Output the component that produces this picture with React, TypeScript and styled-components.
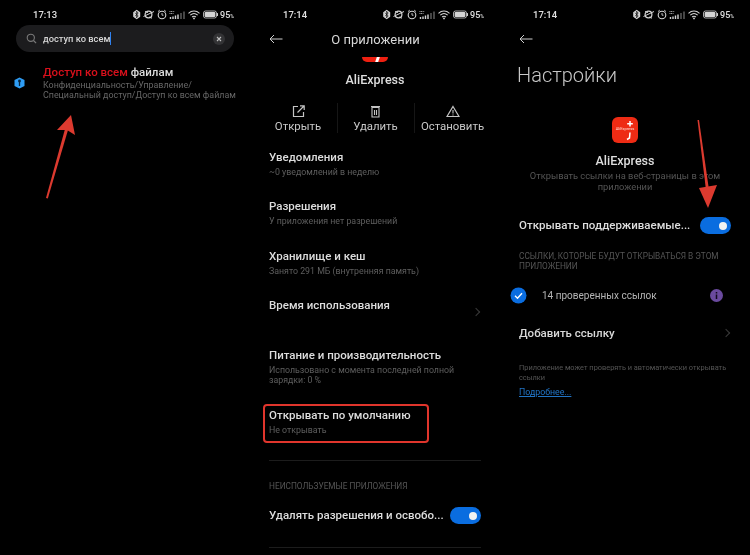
import React from "react";
import styled, { createGlobalStyle } from "styled-components";

const GlobalStyle = createGlobalStyle`
  html, body {
    margin: 0;
    padding: 0;
    background: #000;
  }
  * {
    box-sizing: border-box;
  }
`;

const Screens = styled.div`
  width: 750px;
  height: 555px;
  display: grid;
  grid-template-columns: repeat(3, 250px);
  background: #000;
  overflow: hidden;
  font-family: Roboto, "Noto Sans", sans-serif;
  color: #e4e4e4;
`;

const Phone = styled.div`
  position: relative;
  height: 555px;
  overflow: hidden;
  filter: blur(0.35px);
`;

const StatusRow = styled.div`
  height: 25px;
  padding: 4px 16px 0 33px;
  display: flex;
  align-items: center;
  justify-content: space-between;
`;

const Clock = styled.span`
  font-size: 9.5px;
  font-weight: 500;
  color: #e0e0e0;
`;

const StatusIcons = styled.div`
  display: flex;
  align-items: center;
  gap: 2px;
`;

const Battery = styled.span`
  font-size: 9px;
  font-weight: 500;
  color: #e0e0e0;
  small {
    font-size: 5px;
  }
`;

const SearchBar = styled.div`
  margin: 0 16px;
  height: 27px;
  border-radius: 14px;
  background: #1c1c1e;
  display: flex;
  align-items: center;
  padding: 0 9px 0 10px;
`;

const SearchText = styled.span`
  margin-left: 6px;
  font-size: 9.3px;
  font-weight: 500;
  color: #d8d8d8;
  border-right: 1px solid #2f80ed;
  line-height: 13px;
  flex: none;
  white-space: nowrap;
`;

const ClearButton = styled.span`
  margin-left: auto;
  width: 12px;
  height: 12px;
  border-radius: 50%;
  background: #333335;
  display: flex;
  align-items: center;
  justify-content: center;
`;

const Result = styled.div`
  margin-top: 12px;
  padding-left: 14px;
  display: flex;
  align-items: center;
  gap: 3px;
`;

const ResultTitle = styled.div`
  font-size: 11.5px;
  font-weight: 500;
  line-height: 16px;
  color: #dcdcdc;
  em {
    font-style: normal;
    color: #d8101c;
  }
`;

const ResultPath = styled.div`
  font-size: 8.9px;
  line-height: 10.3px;
  color: #666;
  white-space: nowrap;
`;

const ResultIcon = styled.span`
  width: 20px;
  flex: none;
  padding-top: 2px;
  display: flex;
`;

const ResultBody = styled.div`
  margin-left: 6px;
`;

const NavBar = styled.div`
  height: 28px;
  padding: 0 19px;
  display: flex;
  align-items: center;
  position: relative;
`;

const NavTitle = styled.div`
  flex: 1;
  text-align: center;
  margin-right: 13px;
  font-size: 13px;
  font-weight: 400;
  color: #d8d8d8;
`;

const LogoStub = styled.div`
  width: 26px;
  height: 5px;
  margin: 4px auto 0;
  background: #ee2011;
  border-radius: 0 0 7px 7px;
  display: flex;
  justify-content: center;
`;

const StubMark = styled.span`
  width: 3px;
  height: 5px;
  margin-left: 5px;
  background: #fff;
  transform: skewX(-18deg);
`;

const AppName = styled.div`
  margin-top: 10px;
  text-align: center;
  font-size: 12.5px;
  font-weight: 500;
  line-height: 16px;
  color: #dedede;
`;

const Actions = styled.div`
  margin: 15px 9.5px 0;
  height: 30px;
  display: grid;
  grid-template-columns: 1fr 1fr 1fr;
`;

const Action = styled.div<{ $divided?: boolean }>`
  display: flex;
  flex-direction: column;
  align-items: center;
  justify-content: space-between;
  padding-top: 2px;
  font-size: 11.4px;
  line-height: 13px;
  color: #c8c8c8;
  white-space: nowrap;
  border-left: ${(p) => (p.$divided ? "1px solid #161616" : "none")};
`;

const ListBody = styled.div`
  margin-top: 16.5px;
  padding: 0 19px;
`;

const ListRow = styled.div<{ $boxed?: boolean; $tall?: boolean }>`
  position: relative;
  min-height: ${(p) => (p.$tall ? 60 : 49.5)}px;
  display: flex;
  align-items: flex-start;
  justify-content: space-between;
  ${(p) =>
    p.$boxed &&
    `&::after {
      content: "";
      box-sizing: border-box;
      position: absolute;
      left: -6px;
      top: -4px;
      width: 166px;
      height: 39px;
      border: 2px solid #e0352c;
      border-radius: 4px;
    }`}
`;

const RowTitle = styled.div`
  font-size: 11.5px;
  font-weight: 500;
  line-height: 15px;
  color: #dcdcdc;
  white-space: nowrap;
`;

const RowSub = styled.div`
  font-size: 8.8px;
  line-height: 10px;
  margin-top: 2px;
  color: #5e5e5e;
`;

const Chevron = styled.span<{ $centered?: boolean }>`
  width: 6px;
  height: 6px;
  border-top: 1px solid #3a3a3a;
  border-right: 1px solid #3a3a3a;
  transform: rotate(45deg);
  margin: ${(p) => (p.$centered ? "0 2px 0 0" : "11px 2px 0 0")};
`;

const Divider = styled.div<{ $top: number }>`
  height: 1px;
  background: #1c1c1c;
  margin-top: ${(p) => p.$top}px;
`;

const SectionLabel = styled.div<{ $top: number }>`
  margin-top: ${(p) => p.$top}px;
  font-size: 8.3px;
  line-height: 10px;
  color: #555;
`;

const ToggleRow = styled.div<{ $top: number }>`
  margin-top: ${(p) => p.$top}px;
  height: 17px;
  display: flex;
  align-items: center;
  justify-content: space-between;
`;

const Toggle = styled.span`
  width: 31px;
  height: 17px;
  border-radius: 9px;
  background: #0a6de0;
  display: flex;
  align-items: center;
  justify-content: flex-end;
  padding-right: 4px;
  flex: none;
  &::after {
    content: "";
    width: 8px;
    height: 8px;
    border-radius: 50%;
    background: #f2f2f2;
  }
`;

const PageTitle = styled.div`
  margin: 9px 0 0 17px;
  font-size: 20px;
  font-weight: 300;
  line-height: 26px;
  color: #c8c8c8;
`;

const LogoTile = styled.div`
  width: 26px;
  height: 26px;
  margin: 29px auto 0;
  display: block;
`;

const AppHint = styled.div`
  margin-top: 1px;
  text-align: center;
  font-size: 9.3px;
  line-height: 11px;
  color: #555;
  white-space: nowrap;
`;

const SettingsBody = styled.div`
  padding: 0 19px;
`;

const LinkRow = styled.div`
  margin: 16px 0 0 -9px;
  height: 17px;
  display: flex;
  align-items: center;
  font-size: 10px;
  color: #b4b4b4;
`;

const LinkText = styled.span`
  margin-left: 15px;
  flex: 1;
`;

const InfoBadge = styled.span`
  margin-right: 8px;
  display: flex;
`;

const AddLink = styled.div`
  margin-top: 21px;
  display: flex;
  align-items: center;
  justify-content: space-between;
  font-size: 11.5px;
  font-weight: 500;
  line-height: 16px;
  color: #d8d8d8;
`;

const FinePrint = styled.div`
  margin-top: 22px;
  font-size: 7.4px;
  line-height: 9.5px;
  color: #555;
  white-space: nowrap;
`;

const MoreLink = styled.a`
  display: block;
  margin-top: 5px;
  font-size: 8.8px;
  line-height: 11px;
  color: #2173c4;
  text-decoration: underline;
`;

const ArrowSvg = styled.svg<{ $x: number; $y: number }>`
  position: absolute;
  left: ${(p) => p.$x}px;
  top: ${(p) => p.$y}px;
`;

const StatusBar = ({ time }: { time: string }) => (
  <StatusRow>
    <Clock>{time}</Clock>
    <StatusIcons>
      <svg width="86" height="11" viewBox="0 0 86 11" fill="none">
        {/* bluetooth */}
        <g transform="translate(1.2 0)">
          <path d="M3.5 0.8 7 3.2v4.6L3.5 10.2 0 7.8V3.2z" fill="#d4d4d4" />
          <path d="M3.5 2v7M2 3.8l3 3.2-1.5 1.5M2 7.2l3-3.2-1.5-1.500" stroke="#000" strokeWidth="0.7" />
        </g>
        {/* do not disturb */}
        <g transform="translate(1 0)">
          <circle cx="15.500" cy="5.500" r="3.400" stroke="#d4d4d4" strokeWidth="1.200" />
          <path d="M10.500 7.500 21 2.500M12 2.500l3 1M16 8l3 1.200" stroke="#d4d4d4" strokeWidth="1" />
        </g>
        {/* alarm */}
        <g transform="translate(1 0)">
          <circle cx="29" cy="6" r="3.800" stroke="#d4d4d4" strokeWidth="1.100" />
          <path d="M29 4v2.200h1.500M25 2.600 26.800 1.100M33 2.600 31.200 1.100" stroke="#d4d4d4" strokeWidth="0.900" />
        </g>
        {/* signal */}
        <path d="M37.500 2.500h5M37.500 4.500h4" stroke="#aaa" strokeWidth="1" strokeDasharray="1 0.600" />
        <path d="M38.500 10V8M41 10V7.500M43.500 10V6.500M46 10V5.500" stroke="#d4d4d4" strokeWidth="1.400" />
        <path d="M49 10V4M52 10V2.500" stroke="#6a6a6a" strokeWidth="1.300" />
        {/* wifi */}
        <g transform="translate(6.500 0)">
          <path d="M50 4.300c3.200-3 7.800-3 11 0M51.800 6.200c2.200-2 5.200-2 7.400 0M53.600 8c1.200-1 2.600-1 3.800 0" stroke="#d4d4d4" strokeWidth="1.100" />
          <circle cx="55.500" cy="9.400" r="0.900" fill="#d4d4d4" />
        </g>
        {/* battery */}
        <g transform="translate(6 0)">
          <rect x="65.500" y="2" width="13" height="7" rx="2" stroke="#d4d4d4" strokeWidth="0.800" />
          <rect x="66.600" y="3.100" width="10.800" height="4.800" rx="1" fill="#d4d4d4" />
          <rect x="79" y="4" width="1.200" height="3" rx="0.500" fill="#d4d4d4" />
        </g>
      </svg>
      <Battery>
        95<small>%</small>
      </Battery>
    </StatusIcons>
  </StatusRow>
);

const BackArrow = () => (
  <svg width="14" height="10" viewBox="0 0 14 10" fill="none">
    <path d="M13.500 5H1M5 1 1 5l4 4" stroke="#cfcfcf" strokeWidth="1" />
  </svg>
);

type RedArrowProps = {
  x: number;
  y: number;
  w: number;
  h: number;
  shaft: string;
  head: string;
};

const RedArrow = ({ x, y, w, h, shaft, head }: RedArrowProps) => (
  <ArrowSvg $x={x} $y={y} width={w} height={h} viewBox={`0 0 ${w} ${h}`}>
    <path d={shaft} fill="#dc3a2f" />
    <path d={head} fill="#dc3a2f" />
  </ArrowSvg>
);

const App = () => (
  <Screens>
    <GlobalStyle />
    <Phone>
      <StatusBar time="17:13" />
      <SearchBar>
        <svg width="11" height="11" viewBox="0 0 11 11" fill="none">
          <circle cx="4.800" cy="4.800" r="3.600" stroke="#7a7a7a" strokeWidth="1.100" />
          <path d="m7.500 7.500 2.600 2.600" stroke="#7a7a7a" strokeWidth="1.200" />
        </svg>
        <SearchText>доступ ко всем</SearchText>
        <ClearButton>
          <svg width="6" height="6" viewBox="0 0 6 6">
            <path d="m1 1 4 4M5 1 1 5" stroke="#bdbdbd" strokeWidth="1.100" />
          </svg>
        </ClearButton>
      </SearchBar>
      <Result>
        <ResultIcon>
          <svg width="11" height="12" viewBox="0 0 11 12">
            <path d="M5.500 0.500 10.500 3v6l-5 2.500L0.500 9V3z" fill="#2f9df4" />
            <circle cx="5.500" cy="4" r="1.400" fill="#06263f" />
            <path d="M5.500 4v5" stroke="#06263f" strokeWidth="1.300" />
          </svg>
        </ResultIcon>
        <ResultBody>
          <ResultTitle>
            <em>Доступ ко всем</em> файлам
          </ResultTitle>
          <ResultPath>
            Конфиденциальность/Управление/
            <br />
            Специальный доступ/Доступ ко всем файлам
          </ResultPath>
        </ResultBody>
      </Result>
      <RedArrow
        x={40}
        y={110}
        w={40}
        h={92}
        shaft="M6 88 7.800 88.600 28 20 25 19z"
        head="M31 5 17 20 27 20 35 25z"
      />
    </Phone>

    <Phone>
      <StatusBar time="17:14" />
      <NavBar>
        <BackArrow />
        <NavTitle>О приложении</NavTitle>
      </NavBar>
      <LogoStub>
        <StubMark />
      </LogoStub>
      <AppName>AliExpress</AppName>
      <Actions>
        <Action>
          <svg width="13" height="13" viewBox="0 0 13 13" fill="none">
            <path d="M6 1.500H1.500v10h10V7" stroke="#c4c4c4" strokeWidth="1.200" />
            <path d="M5.500 7.500 12 1M8 0.800h4.200V5" stroke="#c4c4c4" strokeWidth="1.200" />
          </svg>
          Открыть
        </Action>
        <Action $divided>
          <svg width="13" height="13" viewBox="0 0 13 13" fill="none">
            <path d="M3 2.500h7v9.500H3zM2 1.500h9M5.500 5v5M7.500 5v5" stroke="#c4c4c4" strokeWidth="1.100" />
          </svg>
          Удалить
        </Action>
        <Action $divided>
          <svg width="14" height="13" viewBox="0 0 14 13" fill="none">
            <path d="M7 1.500 13 11.500H1z" stroke="#c4c4c4" strokeWidth="1.200" />
            <path d="M7 5v3.500M7 9.500v1" stroke="#c4c4c4" strokeWidth="1.100" />
          </svg>
          Остановить
        </Action>
      </Actions>
      <ListBody>
        <ListRow>
          <div>
            <RowTitle>Уведомления</RowTitle>
            <RowSub>~0 уведомлений в неделю</RowSub>
          </div>
        </ListRow>
        <ListRow>
          <div>
            <RowTitle>Разрешения</RowTitle>
            <RowSub>У приложения нет разрешений</RowSub>
          </div>
        </ListRow>
        <ListRow>
          <div>
            <RowTitle>Хранилище и кеш</RowTitle>
            <RowSub>Занято 291 МБ (внутренняя память)</RowSub>
          </div>
        </ListRow>
        <ListRow>
          <RowTitle>Время использования</RowTitle>
          <Chevron />
        </ListRow>
        <ListRow $tall>
          <div>
            <RowTitle>Питание и производительность</RowTitle>
            <RowSub>
              Использовано с момента последней полной
              <br />
              зарядки: 0 %
            </RowSub>
          </div>
        </ListRow>
        <ListRow $boxed>
          <div>
            <RowTitle>Открывать по умолчанию</RowTitle>
            <RowSub>Не открывать</RowSub>
          </div>
        </ListRow>
        <Divider $top={3} />
        <SectionLabel $top={20}>НЕИСПОЛЬЗУЕМЫЕ ПРИЛОЖЕНИЯ</SectionLabel>
        <ToggleRow $top={16}>
          <RowTitle>Удалять разрешения и освобо...</RowTitle>
          <Toggle />
        </ToggleRow>
        <Divider $top={23} />
      </ListBody>
    </Phone>

    <Phone>
      <StatusBar time="17:14" />
      <NavBar>
        <BackArrow />
      </NavBar>
      <PageTitle>Настройки</PageTitle>
      <LogoTile>
        <svg width="26" height="26" viewBox="0 0 26 26">
          <rect width="26" height="26" rx="6" fill="#ee2b14" />
          <path d="M18 4v5.500M15.200 6.700h5.600" stroke="#fff" strokeWidth="1.500" />
          <text x="13" y="13" textAnchor="middle" fontSize="4" fontFamily="Roboto, sans-serif" fill="#ffd9d0">
            AliExpress
          </text>
          <path d="M18 15.500 17.500 21l-2.500 1.500" stroke="#fff" strokeWidth="1.500" fill="none" />
        </svg>
      </LogoTile>
      <AppName>AliExpress</AppName>
      <AppHint>
        Открывать ссылки на веб-страницы в этом
        <br />
        приложении
      </AppHint>
      <SettingsBody>
        <ToggleRow $top={25}>
          <RowTitle>Открывать поддерживаемые...</RowTitle>
          <Toggle />
        </ToggleRow>
        <SectionLabel $top={17}>
          ССЫЛКИ, КОТОРЫЕ БУДУТ ОТКРЫВАТЬСЯ В ЭТОМ
          <br />
          ПРИЛОЖЕНИИ
        </SectionLabel>
        <LinkRow>
          <svg width="17" height="17" viewBox="0 0 17 17">
            <circle cx="8.500" cy="8.500" r="8" fill="#0a6de0" />
            <path d="m5 8.800 2.500 2.400L12 6.300" stroke="#fff" strokeWidth="1.400" fill="none" />
          </svg>
          <LinkText>14 проверенных ссылок</LinkText>
          <InfoBadge>
            <svg width="13" height="13" viewBox="0 0 13 13">
              <circle cx="6.500" cy="6.500" r="6.500" fill="#6a4a9e" />
              <path d="M6.500 3v1.400M6.500 5.600V10" stroke="#120a1e" strokeWidth="1.500" />
            </svg>
          </InfoBadge>
        </LinkRow>
        <AddLink>
          Добавить ссылку
          <Chevron $centered />
        </AddLink>
        <FinePrint>
          Приложение может проверять и автоматически открывать
          <br />
          ссылки
        </FinePrint>
        <MoreLink>Подробнее...</MoreLink>
      </SettingsBody>
      <RedArrow
        x={190}
        y={118}
        w={30}
        h={92}
        shaft="M7.500 2 9 2 19 72 16 72z"
        head="M9 70 27 67 18 90z"
      />
    </Phone>
  </Screens>
);

export default App;
